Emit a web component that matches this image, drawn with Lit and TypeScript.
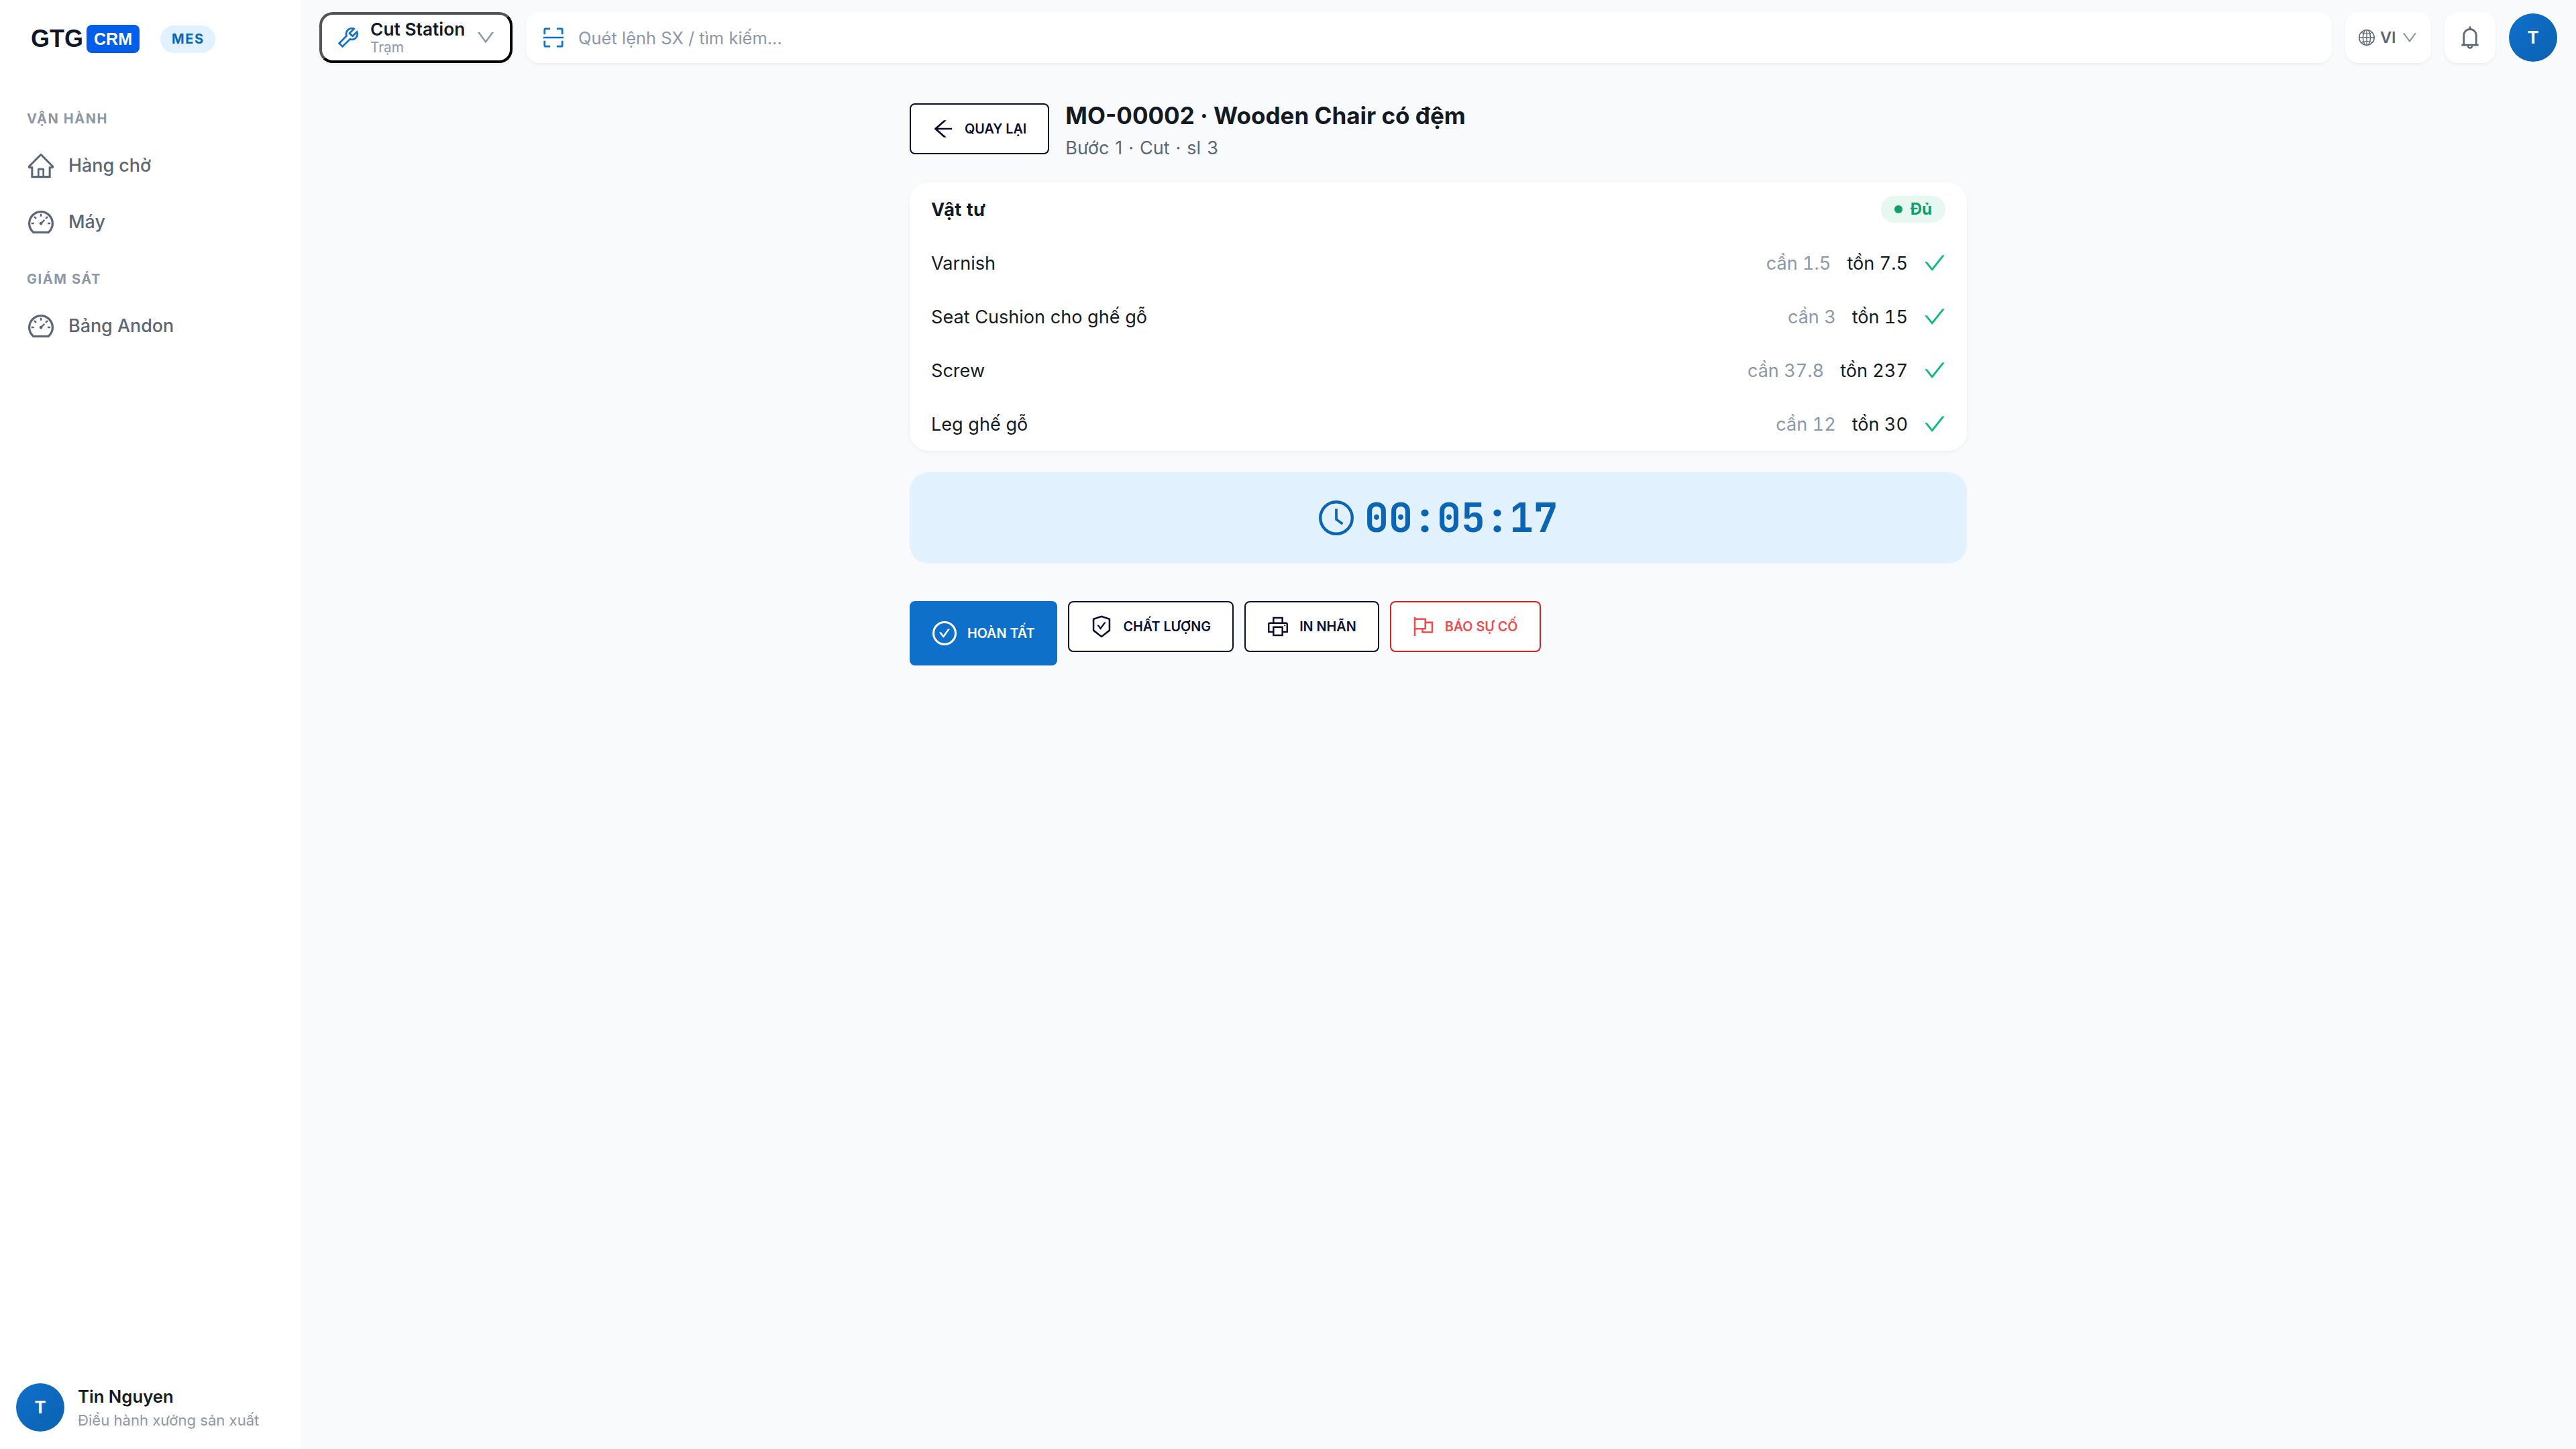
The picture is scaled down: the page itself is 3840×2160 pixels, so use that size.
import { LitElement, html, css, svg } from "lit";
import { customElement, property } from "lit/decorators.js";

const ICONS: Record<string, unknown> = {
  home: svg`<path d="M946.5 505L560.1 118.8l-25.9-25.9a31.5 31.5 0 00-44.4 0L77.5 505a63.9 63.9 0 00-18.8 46c.4 35.2 29.7 63.3 64.9 63.3h42.5V940h691.8V614.3h43.4c17.1 0 33.2-6.7 45.3-18.8a63.6 63.6 0 0018.7-45.3c0-17-6.7-33.1-18.8-45.2zM568 868H456V664h112v204zm217.9-325.7V868H632V640c0-22.1-17.9-40-40-40H432c-22.1 0-40 17.9-40 40v228H238.1V542.3h-96l370-369.7 23.1 23.1L882 542.3h-96.1z"/>`,
  gauge: svg`<path d="M924.8 385.6a446.7 446.7 0 00-96-142.4 446.7 446.7 0 00-142.4-96C631.1 123.8 572.5 112 512 112s-119.1 11.8-174.4 35.2a446.7 446.7 0 00-142.4 96 446.7 446.7 0 00-96 142.4C75.8 440.9 64 499.5 64 560c0 132.7 58.3 257.7 159.9 343.1l1.7 1.4c5.8 4.8 13.1 7.5 20.6 7.5h531.7c7.5 0 14.8-2.7 20.6-7.5l1.7-1.4C901.7 817.7 960 692.7 960 560c0-60.5-11.9-119.1-35.2-174.4zM761.4 836H262.6A371.12 371.12 0 01140 560c0-99.4 38.7-192.8 109-263 70.3-70.3 163.7-109 263-109 99.4 0 192.8 38.7 263 109 70.3 70.3 109 163.7 109 263 0 105.6-44.5 205.5-122.6 276zM623.5 421.5a8.03 8.03 0 00-11.3 0L527.7 506c-18.7-5-39.4-.2-54.1 14.5a55.95 55.95 0 000 79.2 55.95 55.95 0 0079.2 0 55.87 55.87 0 0014.5-54.1l84.5-84.5c3.1-3.1 3.1-8.2 0-11.3l-28.3-28.3zM490 320h44c4.4 0 8-3.6 8-8v-80c0-4.4-3.6-8-8-8h-44c-4.4 0-8 3.6-8 8v80c0 4.4 3.6 8 8 8zm260 218v44c0 4.4 3.6 8 8 8h80c4.4 0 8-3.6 8-8v-44c0-4.4-3.6-8-8-8h-80c-4.4 0-8 3.6-8 8zm12.7-197.2l-31.1-31.1a8.03 8.03 0 00-11.3 0l-56.6 56.6a8.03 8.03 0 000 11.3l31.1 31.1c3.1 3.1 8.2 3.1 11.3 0l56.6-56.6c3.1-3.1 3.1-8.2 0-11.3zm-458.6-31.1a8.03 8.03 0 00-11.3 0l-31.1 31.1a8.03 8.03 0 000 11.3l56.6 56.6c3.1 3.1 8.2 3.1 11.3 0l31.1-31.1c3.1-3.1 3.1-8.2 0-11.3l-56.6-56.6zM262 530h-80c-4.4 0-8 3.6-8 8v44c0 4.4 3.6 8 8 8h80c4.4 0 8-3.6 8-8v-44c0-4.4-3.6-8-8-8z"/>`,
  tool: svg`<path d="M876.6 239.5c-.5-.9-1.2-1.8-2-2.5-5-5-13.1-5-18.1 0L684.2 409.3l-67.9-67.9L788.7 169c.8-.8 1.4-1.6 2-2.5 3.6-6.1 1.6-13.9-4.5-17.5-98.2-58-226.8-44.7-311.3 39.7-67 67-89.2 162-66.5 247.4l-293 293c-3 3-2.8 7.9.3 11l169.7 169.7c3.1 3.1 8.1 3.3 11 .3l292.9-292.9c85.5 22.8 180.5.7 247.6-66.4 84.4-84.5 97.7-213.1 39.7-311.3zM786 499.8c-58.1 58.1-145.3 69.3-214.6 33.6l-8.8 8.8-.1-.1-274 274.1-79.2-79.2 230.1-230.1s0 .1.1.1l52.8-52.8c-35.7-69.3-24.5-156.5 33.6-214.6a184.2 184.2 0 01144-53.5L537 318.9a32.05 32.05 0 000 45.3l124.5 124.5a32.05 32.05 0 0045.3 0l132.8-132.8c3.7 51.8-14.4 104.8-53.6 143.9z"/>`,
  scan: svg`<path d="M136 384h56c4.4 0 8-3.6 8-8V200h176c4.4 0 8-3.6 8-8v-56c0-4.4-3.6-8-8-8H196c-37.6 0-68 30.4-68 68v180c0 4.4 3.6 8 8 8zm512-184h176v176c0 4.4 3.6 8 8 8h56c4.4 0 8-3.6 8-8V196c0-37.6-30.4-68-68-68H648c-4.4 0-8 3.6-8 8v56c0 4.4 3.6 8 8 8zM376 824H200V648c0-4.4-3.6-8-8-8h-56c-4.4 0-8 3.6-8 8v180c0 37.6 30.4 68 68 68h180c4.4 0 8-3.6 8-8v-56c0-4.4-3.6-8-8-8zm512-184h-56c-4.4 0-8 3.6-8 8v176H648c-4.4 0-8 3.6-8 8v56c0 4.4 3.6 8 8 8h180c37.6 0 68-30.4 68-68V648c0-4.4-3.6-8-8-8zm16-164H120c-4.4 0-8 3.6-8 8v56c0 4.4 3.6 8 8 8h784c4.4 0 8-3.6 8-8v-56c0-4.4-3.6-8-8-8z"/>`,
  down: svg`<path d="M884 256h-75c-5.1 0-9.9 2.5-12.9 6.6L512 654.2 227.9 262.6c-3-4.1-7.8-6.6-12.9-6.6h-75c-6.5 0-10.3 7.4-6.5 12.7l352.6 486.1c12.8 17.6 39 17.6 51.7 0l352.6-486.1c3.9-5.3.1-12.7-6.4-12.7z"/>`,
  globe: svg`<g fill="none" stroke="currentColor" stroke-width="50"><circle cx="512" cy="512" r="420" stroke-width="56"/><path d="M512 92v840M92 512h840"/><path d="M420 110C340 230 304 370 304 512s36 282 116 402M604 110c80 120 116 260 116 402s-36 282-116 402"/><path d="M215 222c80 64 180 92 297 92s217-28 297-92M215 802c80-64 180-92 297-92s217 28 297 92"/></g>`,
  bell: svg`<path d="M816 768h-24V428c0-141.1-104.3-257.8-240-277.1V112c0-22.1-17.9-40-40-40s-40 17.9-40 40v38.9C336.3 170.2 232 286.9 232 428v340h-24c-17.7 0-32 14.3-32 32v32c0 4.4 3.6 8 8 8h216c0 61.8 50.2 112 112 112s112-50.2 112-112h216c4.4 0 8-3.6 8-8v-32c0-17.7-14.3-32-32-32zM512 888c-26.5 0-48-21.5-48-48h96c0 26.5-21.5 48-48 48zM304 768V428c0-55.6 21.6-107.8 60.9-147.1S456.4 220 512 220c55.6 0 107.8 21.6 147.1 60.9S720 372.4 720 428v340H304z"/>`,
  back: svg`<path d="M872 474H286.9l350.2-304c5.6-4.9 2.2-14-5.2-14h-88.5c-3.9 0-7.6 1.4-10.5 3.9L155 487.8a31.96 31.96 0 000 48.3L535.1 866c1.5 1.3 3.3 2 5.2 2h91.5c7.4 0 10.8-9.2 5.2-14L286.9 550H872c4.4 0 8-3.6 8-8v-60c0-4.4-3.6-8-8-8z"/>`,
  check: svg`<path d="M912 190h-69.9c-9.8 0-19.1 4.5-25.1 12.2L404.7 724.5 207 474a32 32 0 00-25.1-12.2H112c-6.7 0-10.4 7.7-6.3 12.9l273.9 347c12.8 16.2 37.4 16.2 50.3 0l488.4-618.9c4.1-5.1.4-12.8-6.3-12.8z"/>`,
  clock: svg`<circle cx="512" cy="512" r="410" fill="none" stroke="currentColor" stroke-width="76"/><path d="M686.7 638.6L544.1 535.5V288c0-4.4-3.6-8-8-8H488c-4.4 0-8 3.6-8 8v275.4c0 2.6 1.2 5 3.3 6.5l165.4 120.6c3.6 2.6 8.6 1.8 11.2-1.7l28.6-39c2.6-3.7 1.8-8.7-1.8-11.2z"/>`,
  done: svg`<circle cx="512" cy="512" r="410" fill="none" stroke="currentColor" stroke-width="76"/><path d="M699 353h-46.9c-10.2 0-19.9 4.9-25.9 13.3L469 584.3l-71.2-98.8c-6-8.3-15.6-13.3-25.9-13.3H325c-6.5 0-10.3 7.4-6.5 12.7l124.6 172.8a31.8 31.8 0 0051.7 0l210.6-292c3.9-5.3.1-12.7-6.4-12.7z"/>`,
  shield: svg`<path d="M866.9 169.9L527.1 54.1C523 52.7 517.5 52 512 52s-11 .7-15.1 2.1L157.1 169.9c-8.3 2.8-15.1 12.4-15.1 21.2v482.4c0 8.8 5.7 20.4 12.6 25.9L499.3 968c3.5 2.7 8 4.1 12.6 4.1s9.2-1.4 12.6-4.1l344.7-268.6c6.9-5.4 12.6-17 12.6-25.9V191.1c.2-8.8-6.6-18.3-14.9-21.2zM810 654.3L512 886.5 214 654.3V226.7l298-101.6 298 101.6v427.6zm-405.8-201c-3-4.1-7.8-6.6-13-6.6H336c-6.5 0-10.3 7.4-6.5 12.7l126.4 174a16.1 16.1 0 0026 0l212.6-292.7c3.8-5.3 0-12.7-6.5-12.7h-55.2c-5.1 0-10 2.5-13 6.6L468.9 542.4l-64.7-89.1z"/>`,
  printer: svg`<path d="M820 436h-40c-4.4 0-8 3.6-8 8v40c0 4.4 3.6 8 8 8h40c4.4 0 8-3.6 8-8v-40c0-4.4-3.6-8-8-8zm32-104H732V120c0-4.4-3.6-8-8-8H300c-4.4 0-8 3.6-8 8v212H172c-44.2 0-80 35.8-80 80v328c0 17.7 14.3 32 32 32h168v132c0 4.4 3.6 8 8 8h424c4.4 0 8-3.6 8-8V772h168c17.7 0 32-14.3 32-32V412c0-44.2-35.8-80-80-80zM360 180h304v152H360V180zm304 664H360V568h304v276zm200-140H732V500H292v204H160V412c0-6.6 5.4-12 12-12h680c6.6 0 12 5.4 12 12v292z"/>`,
  flag: svg`<path d="M880 305H624V192c0-17.7-14.3-32-32-32H184v-40c0-4.4-3.6-8-8-8h-56c-4.4 0-8 3.6-8 8v784c0 4.4 3.6 8 8 8h56c4.4 0 8-3.6 8-8V640h248v113c0 17.7 14.3 32 32 32h416c17.7 0 32-14.3 32-32V337c0-17.7-14.3-32-32-32zM184 568V232h368v336H184zm656 145H504v-73h112c4.4 0 8-3.6 8-8V377h216v336z"/>`,
};

@customElement("mes-icon")
export class MesIcon extends LitElement {
  @property() name = "home";
  static styles = css`
    :host { display: block; width: 32px; height: 32px; flex: none; }
    .glyph { display: block; width: 100%; height: 100%; fill: currentColor; overflow: visible; }
  `;
  render() {
    return html`<svg class="glyph" viewBox="64 64 896 896" aria-hidden="true">${ICONS[this.name]}</svg>`;
  }
}

interface Material { name: string; need: string; stock: string; }

const MATERIALS: Material[] = [
  { name: "Varnish", need: "1.5", stock: "7.5" },
  { name: "Seat Cushion cho ghế gỗ", need: "3", stock: "15" },
  { name: "Screw", need: "37.8", stock: "237" },
  { name: "Leg ghế gỗ", need: "12", stock: "30" },
];

const NAV = [
  { label: "VẬN HÀNH", items: [{ icon: "home", text: "Hàng chờ" }, { icon: "gauge", text: "Máy" }] },
  { label: "GIÁM SÁT", items: [{ icon: "gauge", text: "Bảng Andon" }] },
];

@customElement("app-root")
export class AppRoot extends LitElement {
  static styles = css`
    :host {
      display: flex; width: 3840px; height: 2160px; overflow: hidden;
      background: #f8fafc; color: #141a24;
      font-family: Inter, "Noto Sans", sans-serif; font-size: 27.1px; line-height: 1.5;
    }
    * { box-sizing: border-box; }
    button { font-family: inherit; margin: 0; color: inherit; }

    .side { width: 448px; flex: none; background: #fff; display: flex; flex-direction: column; }
    .brand { display: flex; align-items: center; height: 116px; padding-left: 46px; }
    .gtg { font: 700 36px/42px "Liberation Sans", Arial, sans-serif; color: #0f172a; width: 83px; }
    .crm { font: 700 25px/42px "Liberation Sans", Arial, sans-serif; color: #fff; background: #005eea;
      width: 79px; height: 42px; border-radius: 8px; text-align: center; }
    .mes { margin-left: 31px; height: 41px; padding: 0 16px 0 17px; border-radius: 21px; background: #e1f1fe;
      color: #0b65b5; font-weight: 700; font-size: 20px; line-height: 41px; letter-spacing: 1.6px; }
    .nav { padding: 46px 24px 0; flex: 1; }
    .label { font-size: 20px; font-weight: 700; line-height: 30px; letter-spacing: 1.6px; color: #8c98a8;
      padding: 0 16px; margin-bottom: 15px; }
    .group + .group { margin-top: 30px; }
    .items { display: flex; flex-direction: column; gap: 4px; }
    .item { display: flex; align-items: center; gap: 22px; height: 80px; padding-left: 18px;
      font-size: 26.9px; font-weight: 500; color: #5b6676; }
    .item mes-icon { width: 38px; height: 38px; }
    .item span { padding-bottom: 1px; }
    .user { display: flex; align-items: center; gap: 20px; padding: 0 24px; height: 72px; margin-bottom: 26px; }
    .avatar { width: 72px; height: 72px; flex: none; border-radius: 50%; color: #fff; font-weight: 700; font-size: 25.5px;
      display: flex; align-items: center; justify-content: center; background: linear-gradient(135deg, #0f70ca, #0b62b1); }
    .who { display: flex; flex-direction: column; padding-top: 3px; }
    .name { font-size: 25.7px; font-weight: 600; line-height: 36px; }
    .role { font-size: 22.1px; line-height: 35px; color: #8c98a8; }

    .main { flex: 1; display: flex; flex-direction: column; }
    .top { display: flex; align-items: center; gap: 20px; padding: 18px 28px 0; }
    .box { height: 76px; border-radius: 20px; background: #fff; box-shadow: 0 2px 4px rgba(15, 23, 42, .05); display: flex; align-items: center; }
    .station { width: 288px; border: 4px outset #000; padding: 0 22px; gap: 16px; text-align: left; }
    .station .icon { width: 34px; height: 34px; color: #0f70ca; }
    .st { display: flex; flex-direction: column; flex: 1; }
    .st-name { font-size: 26.3px; font-weight: 600; line-height: 30px; white-space: nowrap; }
    .st-sub { font-size: 20.8px; line-height: 24px; color: #8c98a8; }
    .chev { width: 28px; height: 28px; color: #8c98a8; }
    .search { flex: 1; padding-left: 24px; gap: 20px; color: #8c98a8; font-size: 25.5px; }
    .search span { padding-top: 2px; }
    .search mes-icon { color: #0f70ca; width: 34px; height: 34px; }
    .lang { width: 128px; padding: 0 20px; gap: 8px; color: #5b6676; font-weight: 600; font-size: 23.5px; }
    .lang .globe { width: 24px; height: 24px; }
    .lang .chev { width: 24px; height: 24px; margin-left: auto; }
    .bell { width: 76px; justify-content: center; color: #5b6676; }
    .bell mes-icon { width: 34px; height: 34px; }

    .page { width: 1576px; margin: 60px auto 0; display: flex; flex-direction: column; }
    .head { display: flex; align-items: flex-start; gap: 24px; height: 118px; }
    .btn { display: inline-flex; align-items: center; height: 76px; padding: 0 32px; gap: 16px; border-radius: 8px;
      border: 2px solid #0b0d2e; background: #fff; color: #0b0d2e; font-size: 19.75px; font-weight: 600; white-space: nowrap; }
    .btn.primary { height: 96px; background: #0f70ca; border-color: #0f70ca; color: #fff; }
    .btn.primary mes-icon { width: 36px; height: 36px; }
    .btn.danger { border-color: #d92020; color: #ef4d4d; }
    .title { font-size: 35px; font-weight: 700; line-height: 48px; margin-top: -6px; }
    .sub { font-size: 27px; line-height: 40px; color: #5b6676; margin-top: 5px; word-spacing: 1.4px; }

    .card { height: 400px; border-radius: 28px; background: #fff; box-shadow: 0 2px 6px rgba(15, 23, 42, .05); padding: 0 32px; }
    .row { height: 80px; display: flex; align-items: center; justify-content: space-between; }
    .cell { padding-top: 2px; }
    .h { font-weight: 700; letter-spacing: .5px; padding-top: 2px; }
    .ok { display: flex; align-items: center; gap: 12px; height: 40px; border-radius: 20px; padding: 0 20px;
      background: #e7f8f1; color: #0f9f6e; font-size: 24px; font-weight: 700; }
    .dot { width: 12px; height: 12px; border-radius: 50%; background: currentColor; }
    .qty { display: flex; align-items: center; gap: 24px; font-variant-numeric: tabular-nums; }
    .need { color: #8c98a8; }
    .qty mes-icon { color: #10b981; }

    .timer { margin-top: 32px; height: 136px; border-radius: 28px; background: #e1f1fe; color: #0b65b5;
      display: flex; align-items: center; justify-content: center; gap: 16px;
      font: 700 60px/1 "JetBrains Mono", "DejaVu Sans Mono", monospace; }
    .timer mes-icon { width: 52px; height: 52px; }
    .actions { display: flex; align-items: flex-start; gap: 16px; margin-top: 56px; }
  `;

  render() {
    return html`
      <aside class="side">
        <div class="brand">
          <span class="gtg">GTG</span><span class="crm">CRM</span><span class="mes">MES</span>
        </div>
        <nav class="nav">
          ${NAV.map((g) => html`
            <div class="group">
              <div class="label">${g.label}</div>
              <div class="items">
                ${g.items.map((i) => html`<div class="item"><mes-icon name=${i.icon}></mes-icon><span>${i.text}</span></div>`)}
              </div>
            </div>`)}
        </nav>
        <div class="user">
          <div class="avatar">T</div>
          <div class="who"><span class="name">Tin Nguyen</span><span class="role">Điều hành xưởng sản xuất</span></div>
        </div>
      </aside>
      <main class="main">
        <header class="top">
          <button class="box station">
            <mes-icon class="icon" name="tool"></mes-icon>
            <span class="st"><span class="st-name">Cut Station</span><span class="st-sub">Trạm</span></span>
            <mes-icon class="chev" name="down"></mes-icon>
          </button>
          <div class="box search"><mes-icon name="scan"></mes-icon><span>Quét lệnh SX / tìm kiếm...</span></div>
          <div class="box lang"><mes-icon class="globe" name="globe"></mes-icon><span>VI</span><mes-icon class="chev" name="down"></mes-icon></div>
          <div class="box bell"><mes-icon name="bell"></mes-icon></div>
          <div class="avatar">T</div>
        </header>
        <section class="page">
          <div class="head">
            <button class="btn"><mes-icon name="back"></mes-icon><span>QUAY LẠI</span></button>
            <div>
              <div class="title">MO-00002 · Wooden Chair có đệm</div>
              <div class="sub">Bước 1 · Cut · sl 3</div>
            </div>
          </div>
          <div class="card">
            <div class="row"><span class="h">Vật tư</span><span class="ok"><span class="dot"></span>Đủ</span></div>
            ${MATERIALS.map((m) => html`
              <div class="row">
                <span class="cell">${m.name}</span>
                <span class="qty"><span class="cell need">cần ${m.need}</span><span class="cell">tồn ${m.stock}</span><mes-icon name="check"></mes-icon></span>
              </div>`)}
          </div>
          <div class="timer"><mes-icon name="clock"></mes-icon><span>00:05:17</span></div>
          <div class="actions">
            <button class="btn primary"><mes-icon name="done"></mes-icon><span>HOÀN TẤT</span></button>
            <button class="btn"><mes-icon name="shield"></mes-icon><span>CHẤT LƯỢNG</span></button>
            <button class="btn"><mes-icon name="printer"></mes-icon><span>IN NHÃN</span></button>
            <button class="btn danger"><mes-icon name="flag"></mes-icon><span>BÁO SỰ CỐ</span></button>
          </div>
        </section>
      </main>
    `;
  }
}
